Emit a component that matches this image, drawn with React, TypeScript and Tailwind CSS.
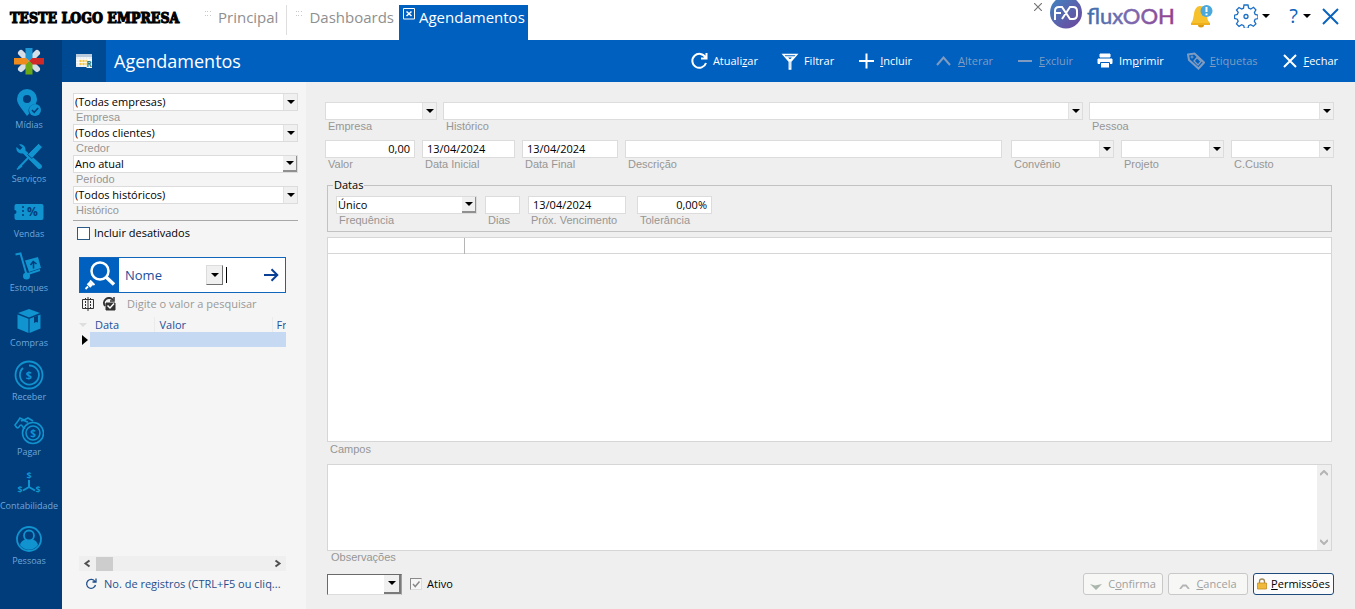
import React from 'react';

const uiFont = "font-['Open_Sans','Noto_Sans',sans-serif]";
const labelFont = "font-['Liberation_Sans',Arial,sans-serif]";

/* ---------- small pieces ---------- */

function Caret({ className = '' }: { className?: string }) {
  return (
    <svg viewBox="0 0 8 4" className={`w-2 h-1 shrink-0 ${className}`} fill="currentColor">
      <path d="M0 0h8L4 4z" />
    </svg>
  );
}

type FieldProps = {
  id: string;
  label: string;
  value?: string;
  className?: string;
  raised?: boolean;
  alignRight?: boolean;
};

function FieldLabel({ id, label }: { id: string; label: string }) {
  return (
    <label htmlFor={id} className={`block pl-[3px] text-[11px] leading-[13px] text-[#969696] whitespace-nowrap ${labelFont}`}>
      {label}
    </label>
  );
}

function SelectField({ id, label, value = '', className = '', raised }: FieldProps) {
  return (
    <div className={className}>
      <div className="flex h-[18px] bg-white border border-[#dcdcdc]">
        <select id={id} defaultValue={value} className="flex-1 min-w-0 appearance-none bg-transparent pl-px text-[11px] leading-4 text-black outline-none">
          <option value={value}>{value}</option>
        </select>
        <span
          className={`w-[14px] shrink-0 flex items-center justify-center bg-[#f0f0f0] pointer-events-none ${
            raised ? 'border-b-2 border-r border-[#909090]' : 'border-l border-[#e2e2e2]'
          }`}
        >
          <Caret />
        </span>
      </div>
      <FieldLabel id={id} label={label} />
    </div>
  );
}

function TextField({ id, label, value = '', className = '', alignRight }: FieldProps) {
  return (
    <div className={className}>
      <input
        id={id}
        type="text"
        defaultValue={value}
        className={`block w-full h-[18px] bg-white border border-[#dcdcdc] px-1 pb-[2px] text-[11px] leading-[14px] text-black outline-none ${
          alignRight ? 'text-right' : ''
        }`}
      />
      <FieldLabel id={id} label={label} />
    </div>
  );
}

/* ---------- sidebar ---------- */

const modules = [
  {
    name: 'Mídias',
    icon: (
      <>
        <path fillRule="evenodd" d="M13 1a10 10 0 0 1 10 10c0 2-.6 3.600-1.500 5.200a6.500 6.500 0 0 0-6.300 9.300L13 28C8 21 3 16 3 11A10 10 0 0 1 13 1zm0 6a4 4 0 1 0 0 8 4 4 0 0 0 0-8z" />
        <circle cx="21" cy="22" r="6" />
        <path d="M18 22l2.200 2.300 4-4.300" fill="none" stroke="#003d7a" strokeWidth="1.500" />
      </>
    ),
  },
  {
    name: 'Serviços',
    icon: (
      <>
        <path d="M5 2.500c3-1 7 1.500 6.500 6l16 14.500a2.500 2.500 0 0 1-3.500 3.500L9 11.500C5 12 1.500 9 2.500 5l3.500 3 2.500-2.500z" />
        <path d="M24.500 1.500l4 3.500L18 16.500l-4.500-4z" stroke="#003d7a" strokeWidth=".8" />
        <path d="M14.500 15.500l-10 10.500" stroke="currentColor" strokeWidth="2" />
        <path d="M6.500 22.500l2 2-5 3.500-1-1z" />
      </>
    ),
  },
  {
    name: 'Vendas',
    icon: (
      <>
        <path d="M2 7h26a2 2 0 0 1 1.500 2v12a2 2 0 0 1-1.500 2H2a2 2 0 0 1-1.500-2v-4a2 2 0 0 0 0-4V9A2 2 0 0 1 2 7z" />
        <path d="M9 9v12" stroke="#003d7a" strokeWidth="1.500" strokeDasharray="2 2" />
        <text x="18.500" y="19" fontSize="12" fontWeight="700" textAnchor="middle" fill="#003d7a">%</text>
      </>
    ),
  },
  {
    name: 'Estoques',
    icon: (
      <>
        <path d="M1.500 3.500l5-1 6 21L26 19" fill="none" stroke="currentColor" strokeWidth="2" />
        <circle cx="12.500" cy="25" r="3.500" />
        <path d="M11 9.500l13-3.500 3 11-12 4z" />
        <path d="M19.500 17.500v-6.500m-3 3l2.700-3.500 3.300 2.500" fill="none" stroke="#003d7a" strokeWidth="1.500" />
      </>
    ),
  },
  {
    name: 'Compras',
    icon: (
      <>
        <path d="M15 3l11 4-11 4.500L4 7zM3.500 8.500l11 4.300V27l-11-4.500zM26.500 8.500l-11 4.300V27l11-4.500z" />
        <path d="M20 11v6l2-1 2 .5v-7" fill="#003d7a" />
      </>
    ),
  },
  {
    name: 'Receber',
    icon: (
      <>
        <circle cx="15" cy="15" r="13.500" fill="none" stroke="currentColor" strokeWidth="1.800" />
        <path d="M9 8a9.500 9.500 0 1 0 6-2.500" fill="none" stroke="currentColor" strokeWidth="1.800" />
        <text x="15" y="19" fontSize="11" fontWeight="700" textAnchor="middle">$</text>
      </>
    ),
  },
  {
    name: 'Pagar',
    icon: (
      <>
        <g fill="none" stroke="currentColor" strokeWidth="1.600">
          <circle cx="19" cy="18" r="10.500" />
          <circle cx="19" cy="18" r="7" />
          <path d="M3 13l-2-3 3-4 2-3 4 2 4-2 5 3M3 13c3 0 2-3 4-3s1 4 4 3M7 6c3-2 5 1 7 1" />
        </g>
        <text x="19" y="21.500" fontSize="10" fontWeight="700" textAnchor="middle">$</text>
      </>
    ),
  },
  {
    name: 'Contabilidade',
    icon: (
      <>
        <path d="M15 11v7l-6 3.500M15 18l6 3.500" fill="none" stroke="currentColor" strokeWidth="2" />
        <g fontSize="9" fontWeight="700" textAnchor="middle">
          <text x="15" y="10">$</text>
          <text x="6" y="24">$</text>
          <text x="24" y="24">$</text>
        </g>
      </>
    ),
  },
  {
    name: 'Pessoas',
    icon: (
      <>
        <circle cx="15" cy="15" r="12" fill="none" stroke="currentColor" strokeWidth="1.800" />
        <circle cx="15" cy="11.500" r="5" fill="none" stroke="currentColor" strokeWidth="1.800" />
        <path d="M6 21c1-4 4-5.500 6-5.500 2 1.500 4 1.500 6 0 2 0 5 1.500 6 5.500a11 11 0 0 1-18 0z" />
      </>
    ),
  },
];

function Sidebar() {
  return (
    <nav className="w-[62px] shrink-0 bg-[#003d7a] flex flex-col pr-1 pb-[35px]">
      <div className="h-11 flex justify-center pt-[6px]">
        <svg viewBox="0 0 30 30" className="w-[30px] h-[30px]">
          <g stroke="#d5dde6" strokeWidth="6" strokeLinecap="round">
            <path d="M7 7l16 16M23 7L7 23" />
          </g>
          <path d="M11.500 2h7v10L15 15l-3.500-3z" fill="#1f97d4" />
          <path d="M30 12v6.500H18L15 15l3-3z" fill="#cf2a27" />
          <path d="M11.500 28.500h7V18L15 15l-3.500 3z" fill="#6aa818" />
          <path d="M0 12v6.500h12L15 15l-3-3z" fill="#ef8a1d" />
        </svg>
      </div>
      {modules.map((m) => (
        <a key={m.name} href="#" className="flex-1 min-h-12 flex flex-col items-center pt-1">
          <svg viewBox="0 0 30 30" className="w-[30px] h-[30px] shrink-0 text-[#1093cf]" fill="currentColor">
            {m.icon}
          </svg>
          <span className="text-[9px] leading-[13px] text-[#6ea6dc] whitespace-nowrap">{m.name}</span>
        </a>
      ))}
    </nav>
  );
}

/* ---------- top bar ---------- */

function TabDots() {
  return (
    <svg viewBox="0 0 6 6" className="w-[6px] h-[6px] shrink-0" fill="#c9c9c9">
      <path d="M0 0h1v1H0zM2 0h1v1H2zM5 0h1v1H5zM0 4h1v1H0zM2 4h1v1H2zM5 4h1v1H5z" />
    </svg>
  );
}

function TopBar() {
  return (
    <header className="h-10 shrink-0 bg-white flex">
      <div className="w-[205px] shrink-0 pl-[10px] pt-2 font-['DejaVu_Serif_Condensed','DejaVu_Serif',serif] font-bold text-[14px] leading-5 text-black whitespace-nowrap [-webkit-text-stroke:1px_black]">
        TESTE LOGO EMPRESA
      </div>
      <nav className="flex pt-[5px] text-[15px] leading-[22px] text-[#8f8f8f]">
        <a href="#" className="flex gap-[7px] pt-px pr-2 mb-[5px] border-r border-[#dedede]">
          <span className="pt-[5px] leading-none"><TabDots /></span>
          <span>Principal</span>
        </a>
        <a href="#" className="flex gap-[7px] pt-px pl-[9px] pr-[5px]">
          <span className="pt-[5px] leading-none"><TabDots /></span>
          <span>Dashboards</span>
        </a>
        <a href="#" className="flex gap-1 pt-px pl-1 pr-[3px] bg-[#0060c0] text-white">
          <svg viewBox="0 0 12 12" className="w-3 h-3 mt-[2px]" fill="none" stroke="currentColor">
            <path d="M.5.500h11v10.500H.500z" />
            <path d="M3.500 3.500l5 4.500M8.500 3.500l-5 4.500" strokeWidth="1.500" />
          </svg>
          <span>Agendamentos</span>
        </a>
      </nav>

      <div className="ml-auto flex pr-4">
        <svg viewBox="0 0 8 8" className="w-2 h-2 mt-[3px] mr-2" stroke="#777" strokeWidth="1.200">
          <path d="M0 0l8 8M8 0L0 8" />
        </svg>
        <svg viewBox="0 0 124 30" className="w-[124px] h-[30px] mr-4">
          <defs>
            <linearGradient id="mark" x1="0" y1="0" x2="1" y2="1">
              <stop offset="0" stopColor="#3f86c2" />
              <stop offset="1" stopColor="#70449b" />
            </linearGradient>
            <linearGradient id="word" gradientUnits="userSpaceOnUse" x1="38" y1="0" x2="122" y2="0">
              <stop offset="0" stopColor="#3f6fae" />
              <stop offset=".5" stopColor="#7c6bb0" />
              <stop offset="1" stopColor="#93418f" />
            </linearGradient>
          </defs>
          <circle cx="16" cy="12.500" r="16" fill="url(#mark)" />
          <g fill="none" stroke="#fff" strokeWidth="2">
            <path d="M5 20V11q0-4 4-4h3l8 12h3q4 0 4-4v-4q0-4-4-4h-3L12 19M5 13h6" />
          </g>
          <text x="37" y="24" fontSize="22" fill="url(#word)" stroke="url(#word)" strokeWidth=".5" fontFamily="Lato, 'Open Sans', sans-serif">
            fluxOOH
          </text>
        </svg>
        <button type="button" aria-label="Notificações" className="mt-1 mr-[21px] h-6">
          <svg viewBox="0 0 23 24" className="w-[23px] h-6">
            <path d="M10 2c5 0 7 4 7 8 0 5 1 7 3 9H1c2-2 2-4 3-9 .5-5 3-8 6-8z" fill="#f7c12d" />
            <path d="M1 19h19v2H1z" fill="#eeb01c" />
            <path d="M8 21h6a3 2.500 0 0 1-6 0z" fill="#d99a12" />
            <circle cx="16.500" cy="7" r="6" fill="#4aa8dc" />
            <path d="M16.500 3v5M16.500 9.500v1.800" stroke="#fff" strokeWidth="2" />
          </svg>
        </button>
        <button type="button" aria-label="Configurações" className="mt-1 mr-[19px] h-6 flex items-center gap-1">
          <svg viewBox="0 0 24 24" className="w-6 h-6" fill="none" stroke="#1c6fc6" strokeWidth="1.300">
            <path d="M10 1h4l.6 3 2.200 1 2.700-1.700 2.400 2.600-1.500 2.600.8 2 2.800.7v3.400l-2.900.6-.8 2 1.600 2.700-2.500 2.400-2.700-1.600-2.100.9-.6 2.900h-3.600l-.7-2.900-2-.9-2.700 1.700-2.500-2.500 1.700-2.700-.9-2-2.800-.7v-3.300l2.800-.7.900-2.100L2.500 6 5 3.500l2.600 1.600 1.900-.9z" />
            <circle cx="12" cy="12.500" r="2" />
          </svg>
          <Caret className="text-black" />
        </button>
        <button type="button" aria-label="Ajuda" className="mt-1 mr-[11px] h-6 flex items-center gap-[5px] text-[20px] leading-6 text-[#0a63bd]">
          ?
          <Caret className="text-black" />
        </button>
        <button type="button" aria-label="Fechar janela" className="mt-1 h-6">
          <svg viewBox="0 0 17 17" className="w-[17px] h-[17px]" stroke="#0a63bd" strokeWidth="2">
            <path d="M1 1l15 15M16 1L1 16" />
          </svg>
        </button>
      </div>
    </header>
  );
}

/* ---------- action bar ---------- */

const actions = [
  {
    before: 'Atuali', key: 'z', after: 'ar', off: false,
    icon: <path d="M15.500 5.500A7 7 0 1 0 16 11M16.500 1v5.500H11" />,
  },
  {
    before: 'Filtrar', key: '', after: '', off: false,
    icon: <path d="M2 2.500h14L9.800 9.500V17H8.200V9.500zM5.500 4.800h7L9 8.500z" strokeWidth="1.300" />,
  },
  { before: '', key: 'I', after: 'ncluir', off: false, icon: <path d="M9.500 1.500v15M2 9h15" /> },
  { before: '', key: 'A', after: 'lterar', off: true, icon: <path d="M2 13l6.500-7.500L15 13" /> },
  { before: '', key: 'E', after: 'xcluir', off: true, icon: <path d="M2 9h14" /> },
  {
    before: 'Im', key: 'p', after: 'rimir', off: false,
    icon: (
      <>
        <path d="M4 2h10v3H4zM2 7h14v4.500H2z" fill="currentColor" strokeWidth="1" />
        <path d="M4.500 10.500h9V16h-9z" fill="#fff" stroke="#0060c0" strokeWidth="1" />
      </>
    ),
  },
  {
    before: '', key: 'E', after: 'tiquetas', off: true,
    icon: (
      <>
        <path d="M1 2.500L7.500 1.500 17 10.500l-5.500 6L2 8z" />
        <circle cx="5" cy="5" r="1" strokeWidth="1" />
        <path d="M7 9l3-3.500 4 4-3 3.500z" strokeWidth="1.300" />
      </>
    ),
  },
  { before: '', key: 'F', after: 'echar', off: false, icon: <path d="M3 3l12 12M15 3L3 15" /> },
];

function ActionBar() {
  return (
    <div className="h-[42px] shrink-0 bg-[#0060c0] flex items-center">
      <div className="w-11 h-full bg-[#004a93] flex items-center justify-center">
        <svg viewBox="0 0 16 14" className="w-4 h-[14px]">
          <path d="M0 0h16v13H0z" fill="#e8eef4" />
          <path d="M0 0h16v3H0z" fill="#b9cbdc" />
          <path d="M3 5h9v6H3z" fill="#f8c445" />
          <path d="M0 5.500h16M0 8.500h16M3 3v10M6 3v10M9 3v10M12 3v10" stroke="#fff" strokeWidth=".8" />
          <path d="M10.500 6.500H16V14h-5.500z" fill="#f4f7f4" />
          <text x="10.500" y="13" fontSize="8" fontWeight="700" fill="#3c7a63">R</text>
        </svg>
      </div>
      <h1 className="pl-2 pb-px text-[18px] leading-6 text-white">Agendamentos</h1>
      <div className="ml-auto pr-[17px] flex gap-[23px] shrink-0">
        {actions.map((a) => (
          <button
            key={a.before + a.key + a.after}
            type="button"
            disabled={a.off}
            className={`flex items-center gap-[5px] text-[11px] leading-[18px] ${a.off ? 'text-[#7f9cc0]' : 'text-white'}`}
          >
            <svg viewBox="0 0 18 18" className="w-[18px] h-[18px]" fill="none" stroke="currentColor" strokeWidth="2">
              {a.icon}
            </svg>
            <span>
              {a.before}
              <u>{a.key}</u>
              {a.after}
            </span>
          </button>
        ))}
      </div>
    </div>
  );
}

/* ---------- left filter panel ---------- */

function FilterPanel() {
  return (
    <aside className="w-[244px] shrink-0 bg-[#f5f5f5] flex flex-col pt-[11px] pb-4">
      <div className="pl-[11px] pr-2">
        <SelectField id="f-empresa" label="Empresa" value="(Todas empresas)" />
        <SelectField id="f-credor" label="Credor" value="(Todos clientes)" />
        <SelectField id="f-periodo" label="Período" value="Ano atual" raised />
        <SelectField id="f-historico" label="Histórico" value="(Todos históricos)" />
        <hr className="mt-[3px] border-[#a8a8a8]" />
        <label className="mt-[5px] pl-1 flex items-center gap-1 text-[11px] leading-[14px] text-black">
          <input type="checkbox" className="appearance-none w-[13px] h-[13px] bg-white border border-[#2c5a86]" />
          Incluir desativados
        </label>
      </div>

      <div className="flex-1 flex flex-col pl-[17px] pr-5 pt-[17px]">
        <div className="h-9 flex items-center border border-[#0f66bb] bg-white text-[#1c4f9c]">
          <span className="w-[39px] h-full bg-[#0060c0] flex items-center justify-center">
            <svg viewBox="0 0 32 32" className="w-8 h-8" fill="none" stroke="#fff">
              <circle cx="16" cy="12" r="8.500" strokeWidth="2.500" />
              <path d="M22 18l8 7.500" strokeWidth="3.500" />
              <path d="M4.500 27l3-3" strokeWidth="5" />
              <path d="M6 21.500l4.500 4.500M1.500 30l2.500-2.500" strokeWidth="1.800" />
            </svg>
          </span>
          <select aria-label="Campo da pesquisa" className="appearance-none w-[87px] pl-[6px] text-[13px] leading-5 outline-none">
            <option>Nome</option>
          </select>
          <span className="w-[17px] h-5 flex items-center justify-center bg-[#f0f0f0] border border-[#dcdcdc] border-b-[#707070] border-r-[#707070] text-black pointer-events-none">
            <Caret />
          </span>
          <span className="w-px h-4 ml-[3px] bg-black" />
          <input id="pesquisa" type="text" className="flex-1 min-w-0 h-5 outline-none text-[13px]" />
          <button type="button" aria-label="Pesquisar" className="mr-[6px]">
            <svg viewBox="0 0 16 14" className="w-4 h-[14px]" fill="none" stroke="#0a3f96" strokeWidth="2">
              <path d="M1 7h13M8.500 1.200L14.300 7l-5.800 5.800" />
            </svg>
          </button>
        </div>

        <div className="h-[22px] flex items-center pl-[3px]">
          <svg viewBox="0 0 12 14" className="w-3 h-[14px]" fill="none" stroke="#333">
            <path d="M.5 2.500h11v9H.500zM6 0v14" />
            <path d="M3.500 1v12M8.500 1v12" strokeDasharray="2 1" />
          </svg>
          <svg viewBox="0 0 14 14" className="w-[14px] h-[14px] ml-2" fill="none" stroke="#333">
            <path d="M11 3A5 5 0 1 0 3 9" strokeWidth="2" />
            <path d="M8 4h4V0" strokeWidth="1.500" />
            <path d="M4 6h9v7H4z" fill="#333" />
            <path d="M5.500 8.500l2.500 2.500 4-4.500" stroke="#fff" strokeWidth="1.500" />
          </svg>
          <label htmlFor="pesquisa" className="pl-[11px] text-[11px] leading-4 text-[#999] whitespace-nowrap">
            Digite o valor a pesquisar
          </label>
        </div>

        <div className="mt-[2px] overflow-hidden">
          <table className="w-full table-fixed border-collapse text-left text-[11px] leading-[14px] text-[#1f4f9a]">
            <thead>
              <tr className="h-[15px]">
                <th className="w-[11px] p-0 text-[#dedede] font-normal"><Caret /></th>
                <th className="w-16 p-0 pl-[5px] font-normal border-r border-[#ebebeb]">Data</th>
                <th className="p-0 pl-[5px] font-normal border-r border-[#ebebeb]">Valor</th>
                <th className="w-[14px] p-0 pl-1 font-normal overflow-hidden">Fr</th>
              </tr>
            </thead>
            <tbody>
              <tr className="h-[15px]">
                <td className="p-0 text-black">
                  <svg viewBox="0 0 6 10" className="w-[6px] h-[10px] ml-[3px]" fill="currentColor">
                    <path d="M0 0l6 5-6 5z" />
                  </svg>
                </td>
                <td colSpan={3} className="p-0 bg-[#c5daf2]" />
              </tr>
            </tbody>
          </table>
        </div>

        <div className="mt-auto h-[15px] flex items-center bg-[#efefef] text-[#505050]">
          <svg viewBox="0 0 17 15" className="w-[17px] h-[15px]" fill="none" stroke="currentColor" strokeWidth="2">
            <path d="M10.500 4.500l-4 3 4 3" />
          </svg>
          <span className="w-[17px] h-[14px] bg-[#cdcdcd]" />
          <svg viewBox="0 0 17 15" className="w-[17px] h-[15px] ml-auto" fill="none" stroke="currentColor" strokeWidth="2">
            <path d="M6.500 4.500l4 3-4 3" />
          </svg>
        </div>
        <button type="button" className="mt-1 flex items-center gap-[7px] pl-[6px] text-[11px] leading-[18px] text-[#1f4f8c] whitespace-nowrap">
          <svg viewBox="0 0 12 12" className="w-3 h-3 shrink-0" fill="none" stroke="currentColor" strokeWidth="1.300">
            <path d="M10 3.500A4.500 4.500 0 1 0 10.500 7M11 .5v3.500H7.500" />
          </svg>
          No. de registros (CTRL+F5 ou cliq...
        </button>
      </div>
    </aside>
  );
}

/* ---------- form ---------- */

function ScheduleForm() {
  return (
    <main className="flex-1 min-w-0 bg-[#efefef] flex flex-col pt-5 pb-[14px] pl-[19px] pr-[21px]">
      <div className="flex gap-[6px]">
        <SelectField id="empresa" label="Empresa" className="w-28 shrink-0" />
        <SelectField id="historico" label="Histórico" className="flex-1" />
        <SelectField id="pessoa" label="Pessoa" className="w-[245px] shrink-0" />
      </div>

      <div className="mt-[7px] flex gap-[7px]">
        <TextField id="valor" label="Valor" value="0,00" alignRight className="w-[90px] shrink-0" />
        <TextField id="data-inicial" label="Data Inicial" value="13/04/2024" className="w-[93px] shrink-0" />
        <TextField id="data-final" label="Data Final" value="13/04/2024" className="w-24 shrink-0" />
        <TextField id="descricao" label="Descrição" className="flex-1 mr-[2px]" />
        <SelectField id="convenio" label="Convênio" className="w-[103px] shrink-0" />
        <SelectField id="projeto" label="Projeto" className="w-[103px] shrink-0" />
        <SelectField id="ccusto" label="C.Custo" className="w-[103px] shrink-0" />
      </div>

      <fieldset className="mt-[7px] mx-[2px] min-w-0 border border-[#c2c2c2] px-2 pt-1 pb-1">
        <legend className="-ml-[3px] px-px text-[11px] leading-[14px] text-black">Datas</legend>
        <div className="flex gap-2">
          <SelectField id="frequencia" label="Frequência" value="Único" raised className="w-[141px]" />
          <TextField id="dias" label="Dias" className="w-[35px]" />
          <TextField id="vencimento" label="Próx. Vencimento" value="13/04/2024" className="w-[98px]" />
          <TextField id="tolerancia" label="Tolerância" value="0,00%" alignRight className="w-[75px] ml-[3px]" />
        </div>
      </fieldset>

      <div className="mt-[5px] mx-[2px] flex-1 min-h-[120px] bg-white border border-[#d6d6d6]">
        <table aria-labelledby="campos" className="w-full border-collapse">
          <thead>
            <tr className="h-[15px] border-b border-[#d6d6d6]">
              <th className="w-[136px] p-0 border-r border-[#b5b5b5]" />
              <th className="p-0" />
            </tr>
          </thead>
        </table>
      </div>
      <div id="campos" className={`pl-[5px] mb-2 text-[11px] leading-[14px] text-[#969696] ${labelFont}`}>Campos</div>

      <div className="mx-[2px] h-[87px] shrink-0 flex bg-white border border-[#d6d6d6]">
        <textarea id="observacoes" className="flex-1 resize-none p-1 text-[11px] outline-none" />
        <div className="w-[14px] bg-[#efefef] flex flex-col justify-between items-center py-[5px] text-[#b4b4b4]">
          <svg viewBox="0 0 8 6" className="w-2 h-[6px]" fill="none" stroke="currentColor" strokeWidth="2">
            <path d="M0 5l4-4 4 4" />
          </svg>
          <svg viewBox="0 0 8 6" className="w-2 h-[6px]" fill="none" stroke="currentColor" strokeWidth="2">
            <path d="M0 1l4 4 4-4" />
          </svg>
        </div>
      </div>
      <div className="pl-[3px]">
        <FieldLabel id="observacoes" label="Observações" />
      </div>

      <div className="mt-[9px] ml-[2px] flex items-center">
        <div className="w-[75px] h-[21px] flex bg-white border border-t-[#6a6a6a] border-l-[#6a6a6a] border-b-[#dcdcdc] border-r-[#a0a0a0]">
          <select aria-label="Situação" className="flex-1 min-w-0 appearance-none outline-none text-[11px]">
            <option></option>
          </select>
          <span className="w-[17px] flex items-center justify-center bg-[#f0f0f0] border-r-2 border-b-2 border-[#7a7a7a] pointer-events-none">
            <Caret />
          </span>
        </div>
        <label className="ml-2 flex items-center gap-[5px] text-[11px] leading-[14px] text-black">
          <span className="grid">
            <input type="checkbox" defaultChecked className="appearance-none col-start-1 row-start-1 w-3 h-3 bg-[#f6f6f6] border border-[#8a8a8a] border-b-[#dcdcdc] border-r-[#dcdcdc]" />
            <svg viewBox="0 0 12 12" className="col-start-1 row-start-1 w-3 h-3 pointer-events-none" fill="none" stroke="#8a8a8a" strokeWidth="1.500">
              <path d="M3 6l2.200 2.500L9.500 3.500" />
            </svg>
          </span>
          Ativo
        </label>

        <div className="ml-auto flex gap-[5px] text-[11px] leading-[18px]">
          <button type="button" disabled className="w-20 h-[22px] flex items-center justify-center gap-[6px] rounded-[3px] border border-[#c8c8c8] bg-[#f7f7f6] text-[#a0a0a0]">
            <svg viewBox="0 0 12 7" className="w-3 h-[7px] mt-1" fill="#aab5ab">
              <path d="M0 1l5 1.500L12 1 6 7z" />
            </svg>
            <span>C<u>o</u>nfirma</span>
          </button>
          <button type="button" disabled className="w-20 h-[22px] flex items-center justify-center gap-[6px] rounded-[3px] border border-[#c8c8c8] bg-[#f7f7f6] text-[#a0a0a0]">
            <svg viewBox="0 0 11 5" className="w-[11px] h-[5px] mt-1" fill="none" stroke="#b4b4b4" strokeWidth="1.800">
              <path d="M1 5l3-3.500h3L10 5" />
            </svg>
            <span><u>C</u>ancela</span>
          </button>
          <button type="button" className="w-[81px] h-[22px] flex items-center justify-center gap-1 rounded-[3px] border border-[#1c4a7c] bg-[#fbfbfb] text-black">
            <svg viewBox="0 0 10 12" className="w-[10px] h-3 shrink-0">
              <path d="M2.500 6V3.500a2.500 2.500 0 0 1 5 0V6" fill="none" stroke="#a08a5a" strokeWidth="1.300" />
              <path d="M.5 5h9v6h-9z" fill="#f0b93a" stroke="#c98d1e" strokeWidth=".8" />
            </svg>
            <span><u>P</u>ermissões</span>
          </button>
        </div>
      </div>
    </main>
  );
}

export default function App() {
  return (
    <div className={`min-h-screen flex flex-col bg-white ${uiFont}`}>
      <TopBar />
      <div className="flex-1 flex">
        <Sidebar />
        <div className="flex-1 min-w-0 flex flex-col">
          <ActionBar />
          <div className="flex-1 flex">
            <FilterPanel />
            <ScheduleForm />
          </div>
        </div>
      </div>
    </div>
  );
}
